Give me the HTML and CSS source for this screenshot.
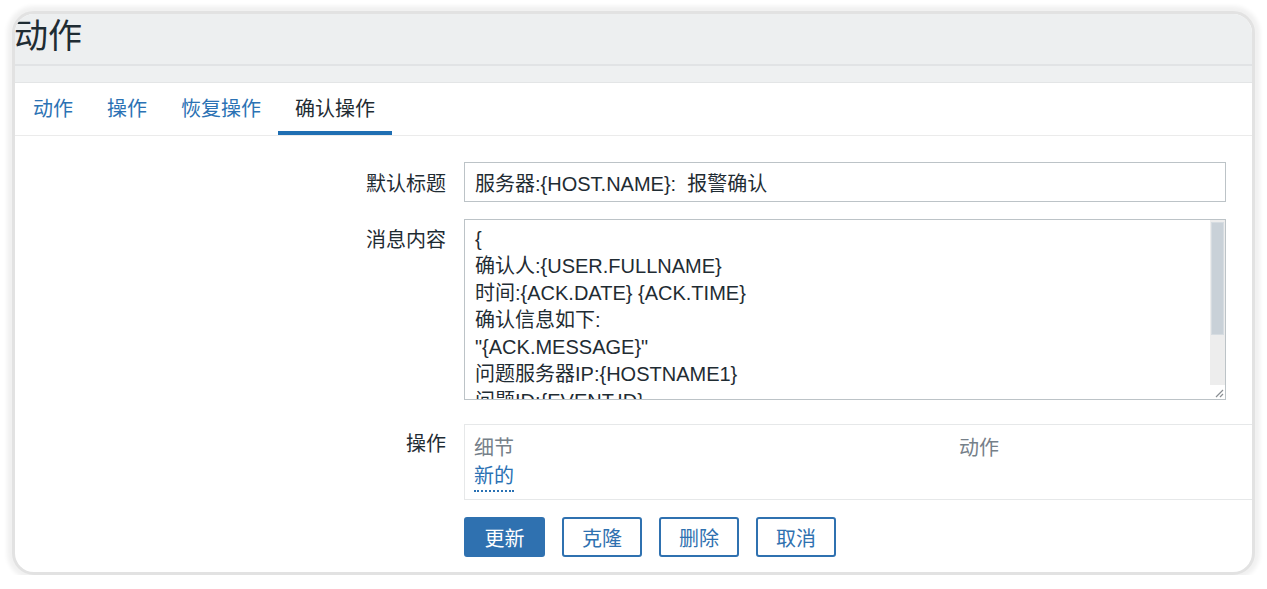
FILE: index.html
```html
<!DOCTYPE html>
<html lang="zh-CN">
<head>
<meta charset="utf-8">
<title>动作</title>
<link rel="stylesheet" href="styles.css">
</head>
<body>
<div class="frame">
  <div class="header"><h1 class="title">动作</h1></div>
  <div class="band"></div>
  <div class="tabs">
    <a class="tab">动作</a>
    <a class="tab">操作</a>
    <a class="tab">恢复操作</a>
    <a class="tab active">确认操作</a>
  </div>
  <div class="form">
    <div class="row row-input">
      <label class="label">默认标题</label>
      <div class="field"><input class="input" type="text" value="服务器:{HOST.NAME}:  报警确认" readonly></div>
    </div>
    <div class="row row-textarea">
      <label class="label label-top">消息内容</label>
      <div class="textarea">
        <div class="ta-text">{
确认人:{USER.FULLNAME}
时间:{ACK.DATE} {ACK.TIME}
确认信息如下:
"{ACK.MESSAGE}"
问题服务器IP:{HOSTNAME1}
问题ID:{EVENT.ID}
当前状态:{EVENT.STATUS}
告警信息:{TRIGGER.NAME}
}</div>
        <div class="ta-scroll">
          <div class="ta-track"><div class="ta-thumb"></div></div>
          <div class="ta-corner">
            <svg class="ta-grip" width="14" height="14" viewBox="0 0 14 14">
              <path d="M12 5 L5 12 M12 9 L9 12" stroke="#8a8f93" stroke-width="1.2" fill="none"/>
            </svg>
          </div>
        </div>
      </div>
    </div>
    <div class="row row-ops">
      <label class="label label-ops">操作</label>
      <div class="ops">
        <div class="ops-head">
          <span class="col-detail">细节</span>
          <span class="col-action">动作</span>
        </div>
        <div class="ops-body">
          <a class="link-new">新的</a>
        </div>
      </div>
    </div>
    <div class="buttons">
      <button class="btn btn-primary">更新</button>
      <button class="btn">克隆</button>
      <button class="btn">删除</button>
      <button class="btn">取消</button>
    </div>
  </div>
</div>
</body>
</html>
```
FILE: styles.css
```css
* { box-sizing: border-box; }
html, body {
  margin: 0;
  padding: 0;
  background: #ffffff;
  font-family: "Noto Sans CJK SC", "Liberation Sans", sans-serif;
  color: #1f2c33;
}
.frame {
  margin: 11px 12px 0 12px;
  width: 1243px;
  height: 564px;
  border: 3px solid #e2e2e2;
  border-radius: 22px;
  box-shadow: 0 0 4px 5px #f1f1f1;
  overflow: hidden;
  background: #ffffff;
  display: flex;
  flex-direction: column;
}
.header {
  height: 52px;
  background: #edeff0;
  border-bottom: 2px solid #e1e3e5;
  flex: none;
}
.title {
  margin: 0 0 0 -1px;
  font-size: 34px;
  font-weight: 400;
  line-height: 40px;
  color: #1f2c33;
}
.band {
  height: 17px;
  background: #eef0f1;
  border-bottom: 1px solid #e3e5e6;
  flex: none;
}
.tabs {
  height: 53px;
  display: flex;
  padding-left: 1px;
  border-bottom: 1px solid #ebebeb;
  flex: none;
}
.tab {
  padding: 0 17px;
  font-size: 20px;
  line-height: 50px;
  color: #2b72b4;
  border-bottom: 4px solid transparent;
  cursor: pointer;
}
.tab.active {
  color: #1f2c33;
  border-bottom-color: #1f6fb3;
}
.form {
  padding-top: 26px;
  display: flex;
  flex-direction: column;
}
.row {
  display: grid;
  grid-template-columns: 431px 1fr;
  column-gap: 18px;
}
.label {
  text-align: right;
  font-size: 20px;
  color: #1f2c33;
}
.row-input { align-items: center; }
.field { width: 762px; }
.input {
  width: 762px;
  height: 40px;
  border: 1px solid #bcc3c7;
  padding: 0 10px;
  font-family: "Liberation Sans", "Noto Sans CJK SC", sans-serif;
  font-size: 20px;
  color: #1f2c33;
  outline: none;
  background: #ffffff;
}
.row-textarea { margin-top: 17px; }
.label-top { padding-top: 5px; line-height: 30px; }
.textarea {
  width: 762px;
  height: 181px;
  border: 1px solid #bcc3c7;
  display: flex;
  background: #ffffff;
  overflow: hidden;
}
.ta-text {
  flex: 1;
  padding: 6px 10px;
  font-family: "Liberation Sans", "Noto Sans CJK SC", sans-serif;
  font-size: 20px;
  line-height: 27px;
  color: #1f2c33;
  white-space: pre;
  overflow: hidden;
}
.ta-scroll {
  width: 15px;
  display: flex;
  flex-direction: column;
  background: #ededed;
}
.ta-track {
  flex: 1;
  padding: 2px 1px 0;
}
.ta-thumb {
  height: 113px;
  background: #c9d1d8;
  border: 1px solid #d6dce1;
}
.ta-corner {
  height: 14px;
  background: #ffffff;
  display: flex;
  justify-content: flex-end;
  align-items: flex-end;
}
.ta-grip { display: block; }
.row-ops { margin-top: 24px; }
.label-ops { line-height: 38px; }
.ops {
  border-top: 1px solid #e6e8e9;
  border-bottom: 1px solid #e6e8e9;
  border-left: 1px solid #e6e8e9;
  height: 76px;
  padding: 7px 9px 0;
  margin-right: -3px;
}
.ops-head {
  display: flex;
  font-size: 20px;
  line-height: 29px;
  color: #768089;
}
.col-detail { width: 485px; }
.ops-body { font-size: 20px; line-height: 28px; }
.link-new {
  color: #2b72b4;
  border-bottom: 2px dotted #2b72b4;
  padding-bottom: 1px;
}
.buttons {
  display: flex;
  gap: 17px;
  margin-top: 17px;
  padding-left: 449px;
}
.btn {
  width: 80px;
  height: 40px;
  border: 2px solid #2f71b0;
  border-radius: 3px;
  background: #ffffff;
  color: #2f71b0;
  font-family: "Noto Sans CJK SC", sans-serif;
  font-size: 20px;
  padding: 0;
  cursor: pointer;
}
.btn-primary {
  width: 81px;
  background: #2f71b0;
  color: #ffffff;
}
```
